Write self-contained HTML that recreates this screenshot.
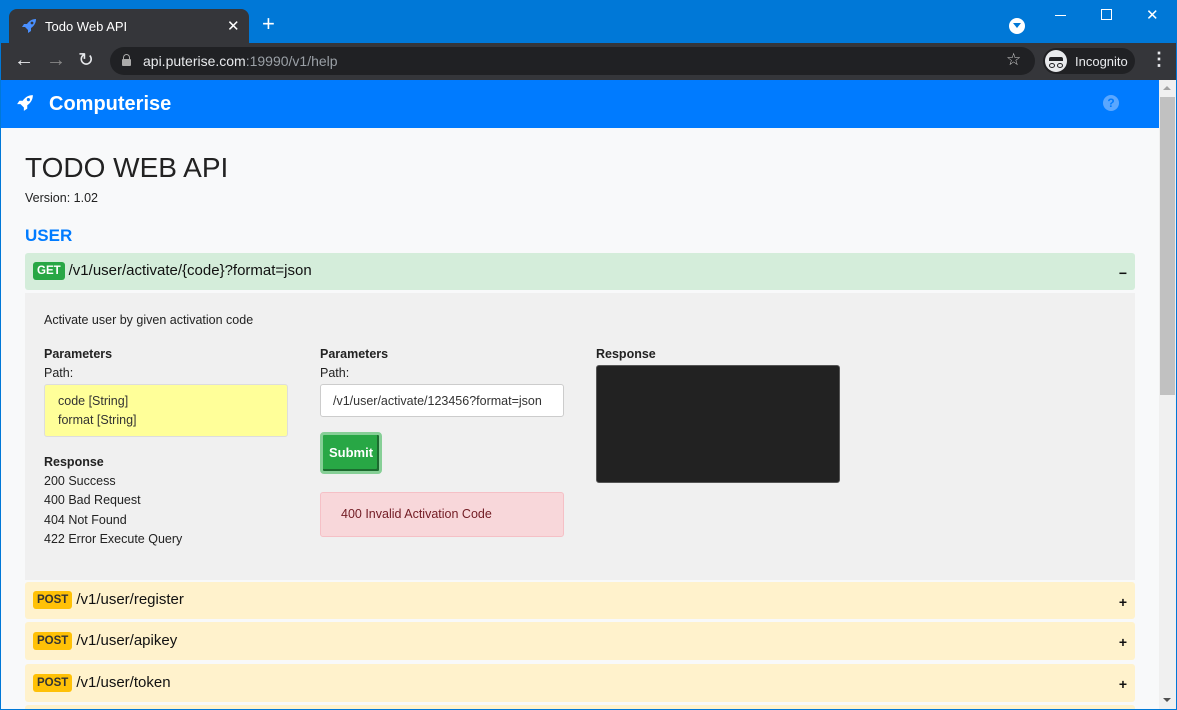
<!DOCTYPE html>
<html><head><meta charset="utf-8"><style>
*{box-sizing:border-box;margin:0;padding:0}
body{width:1177px;height:710px;overflow:hidden;font-family:"Liberation Sans",Arial,sans-serif;background:#0078d7;position:relative}
.abs{position:absolute}
.tab{left:9px;top:9px;width:240px;height:35px;background:#35363a;border-radius:8px 8px 0 0;color:#fff;font-size:13px}
.toolbar{left:1px;top:43px;width:1175px;height:37px;background:#35363a}
.omni{left:110px;top:47px;width:925px;height:28px;background:#202124;border-radius:14px;color:#e8eaed;font-size:14px}
.page{left:1px;top:80px;width:1158px;height:629px;background:#f8f9fa;overflow:hidden}
.nav{left:0;top:0;width:1158px;height:48px;background:#007bff;color:#fff}
.row{position:absolute;left:24px;width:1110px;border-radius:3px;font-size:15px;color:#111}
.badge{display:inline-block;border-radius:3px;font-weight:bold;font-size:11.5px;padding:3px 4px;margin-right:4px;vertical-align:1px}
.sm{font-size:12.5px;color:#222}
b.h{font-size:12.5px;font-weight:bold;color:#222}
.pm{position:absolute;right:8px;top:12px;font-weight:bold;font-size:14px}
</style></head><body>
<div class="abs tab">
 <svg class="abs" style="left:12px;top:9px" width="16" height="16" viewBox="0 0 16 16"><path d="M15 1C11 1 8 3 6 6L3 6 1 9 4 9 7 12 7 15 10 13 10 10C13 8 15 5 15 1Z" fill="#4a90ff"/><circle cx="11" cy="5" r="1.4" fill="#35363a"/></svg>
 <span class="abs" style="left:36px;top:10px">Todo Web API</span>
 <span class="abs" style="left:218px;top:8px;font-size:15px">✕</span>
</div>
<span class="abs" style="left:262px;top:13px;color:#fff;font-size:22px;line-height:22px">+</span>
<div class="abs" style="left:1009px;top:18px;width:16px;height:16px;border-radius:50%;background:#fff"><div class="abs" style="left:4px;top:5px;border-left:4px solid transparent;border-right:4px solid transparent;border-top:5px solid #0078d7"></div></div>
<div class="abs" style="left:1055px;top:15px;width:11px;height:1px;background:#fff"></div>
<div class="abs" style="left:1101px;top:9px;width:11px;height:11px;border:1px solid #fff"></div>
<span class="abs" style="left:1146px;top:6px;color:#fff;font-size:15px">✕</span>
<div class="abs toolbar">
 <span class="abs" style="left:13px;top:6px;color:#e8eaed;font-size:20px">←</span>
 <span class="abs" style="left:45px;top:6px;color:#888;font-size:20px">→</span>
 <span class="abs" style="left:77px;top:6px;color:#e8eaed;font-size:19px">↻</span>
 <span class="abs" style="left:1149px;top:6px;color:#e8eaed;font-size:18px;font-weight:bold">⋮</span>
</div>
<div class="abs omni">
 <div class="abs" style="left:12px;top:12px;width:9px;height:7px;background:#aaa;border-radius:1px"></div>
 <div class="abs" style="left:13px;top:7px;width:7px;height:7px;border:1.5px solid #aaa;border-radius:4px 4px 0 0"></div>
 <span class="abs" style="left:33px;top:6px">api.puterise.com<span style="color:#9aa0a6">:19990/v1/help</span></span>
 <span class="abs" style="left:896px;top:3px;color:#ccc;font-size:17px">☆</span>
</div>
<div class="abs" style="left:1043px;top:48px;width:92px;height:26px;background:#202124;border-radius:13px;color:#e8eaed;font-size:13px">
 <div class="abs" style="left:2px;top:2px;width:22px;height:22px;border-radius:50%;background:#e8eaed"></div>
 <div class="abs" style="left:6px;top:9px;width:14px;height:4px;background:#202124;border-radius:2px 2px 0 0"></div>
 <div class="abs" style="left:6px;top:15px;width:6px;height:5px;border:1.3px solid #202124;border-radius:50%"></div>
 <div class="abs" style="left:14px;top:15px;width:6px;height:5px;border:1.3px solid #202124;border-radius:50%"></div>
 <span class="abs" style="left:32px;top:6px">Incognito</span>
</div>
<div class="abs page">
 <div class="abs nav">
  <svg class="abs" style="left:15px;top:14px" width="18" height="18" viewBox="0 0 16 16"><path d="M15 1C11 1 8 3 6 6L3 6 1 9 4 9 7 12 7 15 10 13 10 10C13 8 15 5 15 1Z" fill="#fff"/><circle cx="11" cy="5" r="1.4" fill="#007bff"/></svg>
  <span class="abs" style="left:48px;top:13px;font-size:20px;font-weight:bold">Computerise</span>
  <div class="abs" style="left:1102px;top:15px;width:16px;height:16px;border-radius:50%;background:#5aa7ff;color:#007bff;font-size:12px;font-weight:bold;text-align:center;line-height:16px">?</div>
 </div>
 <div class="abs" style="left:24px;top:72px;font-size:28px;color:#222">TODO WEB API</div>
 <div class="abs sm" style="left:24px;top:111px">Version: 1.02</div>
 <div class="abs" style="left:24px;top:146px;font-size:17px;font-weight:bold;color:#007bff">USER</div>
 <div class="row" style="top:173px;height:37px;background:#d4edda;padding:9px 8px">
  <span class="badge" style="background:#28a745;color:#fff">GET</span>/v1/user/activate/{code}?format=json
  <span class="pm">−</span>
 </div>
 <div class="row" style="top:213px;height:287px;background:#f0f0f0;border-radius:0">
  <div class="abs sm" style="left:19px;top:20px">Activate user by given activation code</div>
  <b class="abs h" style="left:19px;top:54px">Parameters</b>
  <div class="abs sm" style="left:19px;top:73px">Path:</div>
  <div class="abs sm" style="left:19px;top:91px;width:244px;height:53px;background:#ffff99;border:1px solid #ddd;border-radius:3px;padding:7px 13px;line-height:19px;color:#333">code [String]<br>format [String]</div>
  <b class="abs h" style="left:19px;top:162px">Response</b>
  <div class="abs sm" style="left:19px;top:179px;line-height:19.3px">200 Success<br>400 Bad Request<br>404 Not Found<br>422 Error Execute Query</div>
  <b class="abs h" style="left:295px;top:54px">Parameters</b>
  <div class="abs sm" style="left:295px;top:73px">Path:</div>
  <div class="abs sm" style="left:295px;top:91px;width:244px;height:33px;background:#fff;border:1px solid #ccc;border-radius:3px;padding:9px 12px;color:#333">/v1/user/activate/123456?format=json</div>
  <div class="abs" style="left:295px;top:139px;width:62px;height:42px;border-radius:4px;background:#28a745;border:3px solid #86cf96;box-shadow:inset -2px -2px 0 #1c6b2f;color:#fff;font-size:13px;font-weight:bold;text-align:center;line-height:36px">Submit</div>
  <div class="abs sm" style="left:295px;top:199px;width:244px;height:45px;background:#f8d7da;border:1px solid #f5c0c6;border-radius:3px;padding:14px 20px;color:#721c24">400 Invalid Activation Code</div>
  <b class="abs h" style="left:571px;top:54px">Response</b>
  <div class="abs" style="left:571px;top:72px;width:244px;height:118px;background:#222;border:1px solid #555;border-radius:3px"></div>
 </div>
 <div class="row" style="top:502px;height:37px;background:#fff2cc;padding:9px 8px"><span class="badge" style="background:#ffc107;color:#333">POST</span>/v1/user/register<span class="pm">+</span></div>
 <div class="row" style="top:542px;height:38px;background:#fff2cc;padding:10px 8px"><span class="badge" style="background:#ffc107;color:#333">POST</span>/v1/user/apikey<span class="pm">+</span></div>
 <div class="row" style="top:584px;height:38px;background:#fff2cc;padding:10px 8px"><span class="badge" style="background:#ffc107;color:#333">POST</span>/v1/user/token<span class="pm">+</span></div>
 <div class="row" style="top:625px;height:20px;background:#fff2cc"></div>
</div>
<div class="abs" style="left:1159px;top:80px;width:17px;height:629px;background:#f0f0f0">
 <div class="abs" style="left:1px;top:17px;width:15px;height:298px;background:#c1c1c1"></div>
 <div class="abs" style="left:4px;top:6px;border-left:4px solid transparent;border-right:4px solid transparent;border-bottom:4px solid #a3a3a3"></div>
 <div class="abs" style="left:4px;top:618px;border-left:4px solid transparent;border-right:4px solid transparent;border-top:4px solid #505050"></div>
</div>
</body></html>
